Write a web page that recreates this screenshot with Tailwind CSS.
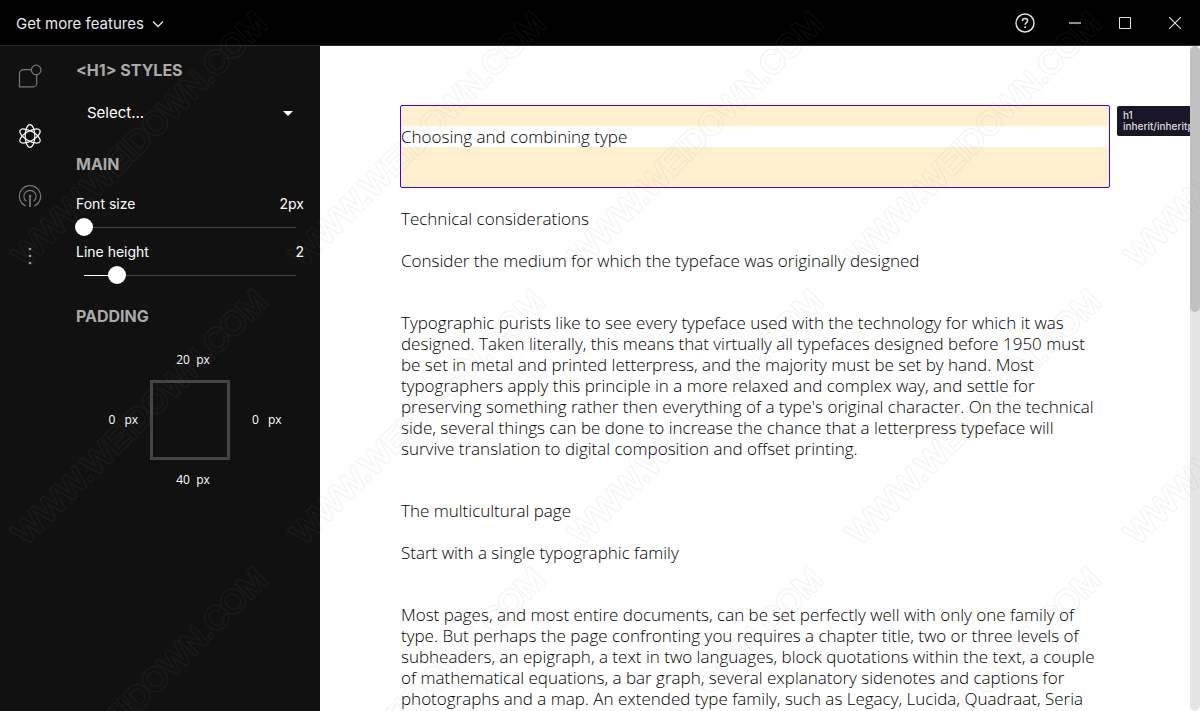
<!DOCTYPE html>
<html lang="en">
<head>
<meta charset="utf-8">
<title>Type styles</title>
<script src="https://cdn.jsdelivr.net/npm/@tailwindcss/browser@4"></script>
</head>
<body class="relative flex h-screen flex-col overflow-hidden bg-[#111] font-['Inter',sans-serif] text-white">
  <header class="flex h-[46px] shrink-0 items-center justify-between border-b border-[#2b2b2b] bg-black pl-4">
    <button class="flex items-center gap-2 pt-0.5 text-[15px] leading-6 text-[#e8e8e8]">
      Get more features
      <svg class="h-3 w-3" viewBox="0 0 12 12" fill="none" stroke="currentColor" stroke-width="1.3"><path d="M1 3.500l5 5 5-5"/></svg>
    </button>
    <div class="flex items-center text-[#e0e0e0]">
      <button aria-label="Help" class="flex h-11 w-[50px] items-center justify-center">
        <svg class="h-5 w-5" viewBox="0 0 20 20" fill="none" stroke="currentColor" stroke-width="1.5"><circle cx="10" cy="10" r="9"/><path d="M7.4 8.1c0-1.5 1.1-2.6 2.6-2.6s2.6 1 2.6 2.3c0 1.8-2.4 1.9-2.4 4"/><path d="M10.2 13.300v1.700" stroke-width="1.700"/></svg>
      </button>
      <button aria-label="Minimize" class="flex h-11 w-[50px] items-center justify-center">
        <svg class="h-3 w-3" viewBox="0 0 12 12" stroke="#8c8c8c" stroke-width="2"><path d="M0 6h12"/></svg>
      </button>
      <button aria-label="Maximize" class="flex h-11 w-[50px] items-center justify-center">
        <svg class="h-3 w-3" viewBox="0 0 12 12" fill="none" stroke="currentColor"><path d="M.5.5h11v11H.5z"/></svg>
      </button>
      <button aria-label="Close" class="flex h-11 w-[50px] items-center justify-center">
        <svg class="h-3 w-3" viewBox="0 0 12 12" stroke="currentColor" stroke-width="1.100"><path d="M0 0l12 12M12 0L0 12"/></svg>
      </button>
    </div>
  </header>

  <div class="flex min-h-0 flex-1">
    <nav class="flex w-[60px] shrink-0 flex-col items-center gap-9 pt-[18px] text-[#777]">
      <button aria-label="Components">
        <svg class="h-6 w-6" viewBox="0 0 24 24" fill="none" stroke="currentColor" stroke-width="1.200"><circle cx="18.200" cy="6" r="4.800"/><path d="M13.400 5.700H5.500a4 4 0 0 0-4 4v13.200h13.200a4 4 0 0 0 4-4v-8.100"/></svg>
      </button>
      <button aria-label="Styles" class="text-white">
        <svg class="h-6 w-6" viewBox="0 0 24 24" fill="none" stroke="currentColor" stroke-width="1.200"><ellipse cx="12" cy="12" rx="4.800" ry="11.400"/><ellipse cx="12" cy="12" rx="4.800" ry="11.400" transform="rotate(60 12 12)"/><ellipse cx="12" cy="12" rx="4.800" ry="11.400" transform="rotate(120 12 12)"/></svg>
      </button>
      <button aria-label="Broadcast">
        <svg class="h-6 w-6" viewBox="0 0 24 24" fill="none" stroke="currentColor" stroke-width="1.200"><path d="M7.600 21.900a10.600 10.600 0 1 1 8.800 0M8.400 17.300a6.100 6.100 0 1 1 7.200 0"/><path d="M12 12v11" stroke-width="1.800"/><circle cx="12" cy="12" r="1.300" fill="currentColor" stroke="none"/></svg>
      </button>
      <button aria-label="More" class="text-[#999]">
        <svg class="h-6 w-6" viewBox="0 0 24 24" fill="currentColor"><circle cx="12" cy="5" r="1.300"/><circle cx="12" cy="12" r="1.300"/><circle cx="12" cy="19" r="1.300"/></svg>
      </button>
    </nav>

    <aside class="w-[260px] shrink-0 px-4 pt-3 text-sm">
      <h2 class="text-base font-bold text-[#aaa]">&lt;H1&gt; STYLES</h2>
      <div class="relative mt-3 flex items-center">
        <select aria-label="Style preset" class="h-[38px] w-full appearance-none bg-transparent px-[11px] text-[15px] text-white outline-none">
          <option>Select...</option>
        </select>
        <svg class="pointer-events-none absolute right-[11px] h-[5px] w-[10px]" viewBox="0 0 10 5" fill="#fff"><path d="M0 0h10L5 5z"/></svg>
      </div>

      <h2 class="mt-5 text-base font-bold text-[#aaa]">MAIN</h2>
      <div class="mt-[18px] flex justify-between leading-5">
        <label for="font-size">Font size</label><output for="font-size">2px</output>
      </div>
      <div class="-mx-px mt-1 flex">
        <input id="font-size" type="range" min="2" max="100" value="2" class="h-[18px] w-full appearance-none bg-[linear-gradient(to_right,#444,#444)] bg-[length:calc(100%-18px)_1px] bg-center bg-no-repeat [&::-webkit-slider-thumb]:h-[18px] [&::-webkit-slider-thumb]:w-[18px] [&::-webkit-slider-thumb]:appearance-none [&::-webkit-slider-thumb]:rounded-full [&::-webkit-slider-thumb]:bg-white">
      </div>
      <div class="mt-1.5 flex justify-between leading-5">
        <label for="line-height">Line height</label><output for="line-height">2</output>
      </div>
      <div class="-mx-px mt-1 flex">
        <input id="line-height" type="range" min="0" max="13" value="2" class="h-[18px] w-full appearance-none bg-[linear-gradient(to_right,#fff_15%,#444_15%)] bg-[length:calc(100%-18px)_1px] bg-center bg-no-repeat [&::-webkit-slider-thumb]:h-[18px] [&::-webkit-slider-thumb]:w-[18px] [&::-webkit-slider-thumb]:appearance-none [&::-webkit-slider-thumb]:rounded-full [&::-webkit-slider-thumb]:bg-white">
      </div>

      <h2 class="mt-5 text-base font-bold text-[#aaa]">PADDING</h2>
      <div class="mt-[22px] flex flex-col items-center gap-2.5 font-['Open_Sans',sans-serif] text-xs leading-5">
        <label class="flex gap-0.5 pl-1.5"><input aria-label="Padding top" value="20" class="w-[18px] bg-transparent outline-none">px</label>
        <div class="flex items-center gap-3 pl-2.5">
          <label class="flex gap-0.5"><input aria-label="Padding left" value="0" class="w-[14px] bg-transparent outline-none">px</label>
          <div class="h-20 w-20 border-3 border-[#444]"></div>
          <label class="flex gap-0.5 pl-2.5"><input aria-label="Padding right" value="0" class="w-[14px] bg-transparent outline-none">px</label>
        </div>
        <label class="flex gap-0.5 pl-1.5"><input aria-label="Padding bottom" value="40" class="w-[18px] bg-transparent outline-none">px</label>
      </div>
    </aside>

    <main class="relative min-w-0 flex-1 overflow-hidden bg-white px-20 pt-[59px] font-['Open_Sans',sans-serif] text-[17px] leading-[21px] font-light text-black">
      <div class="relative rounded-xs border border-[#4a00e0] bg-[#fff0cf] pt-5 pb-10">
        <h1 class="bg-white">Choosing and combining type</h1>
        <div class="absolute top-0 left-full ml-2 rounded-xs bg-[#1a1625] px-1.5 py-1 font-['Inter',sans-serif] text-[10px] leading-[11px] font-medium whitespace-nowrap text-[#ddd]">h1<br>inherit/inheritpx</div>
      </div>
      <div class="pr-1.5 pl-px">
        <h2 class="mt-5">Technical considerations</h2>
        <h3 class="mt-[21px]">Consider the medium for which the typeface was originally designed</h3>
        <p class="mt-[41px]">Typographic purists like to see every typeface used with the technology for which it was designed. Taken literally, this means that virtually all typefaces designed before 1950 must be set in metal and printed letterpress, and the majority must be set by hand. Most typographers apply this principle in a more relaxed and complex way, and settle for preserving something rather then everything of a type's original character. On the technical side, several things can be done to increase the chance that a letterpress typeface will survive translation to digital composition and offset printing.</p>
        <h2 class="mt-[41px]">The multicultural page</h2>
        <h3 class="mt-[21px]">Start with a single typographic family</h3>
        <p class="mt-[41px]">Most pages, and most entire documents, can be set perfectly well with only one family of type. But perhaps the page confronting you requires a chapter title, two or three levels of subheaders, an epigraph, a text in two languages, block quotations within the text, a couple of mathematical equations, a bar graph, several explanatory sidenotes and captions for photographs and a map. An extended type family, such as Legacy, Lucida, Quadraat, Seria</p>
      </div>
    </main>
    <div class="w-2.5 shrink-0 bg-white"><div class="h-full rounded-full bg-[#e5e5e5]"><div class="h-2/5 rounded-full bg-[#c1c1c1]"></div></div></div>
  </div>

  <svg class="pointer-events-none absolute inset-0 h-full w-full" aria-hidden="true">
    <defs>
      <mask id="outline" maskUnits="userSpaceOnUse" x="0" y="0" width="278" height="278">
        <g transform="translate(26 268) rotate(-45)" font-family="Liberation Sans" font-size="32" stroke-linejoin="round">
          <text fill="#fff" stroke="#fff" stroke-width="3">WWW.WEIDOWN.COM</text>
          <text fill="#000" stroke="#000" stroke-width="1">WWW.WEIDOWN.COM</text>
        </g>
      </mask>
      <pattern id="mark" width="278" height="278" patternUnits="userSpaceOnUse">
        <rect width="278" height="278" fill="#808080" fill-opacity="0.100" mask="url(#outline)"/>
      </pattern>
    </defs>
    <rect width="100%" height="100%" fill="url(#mark)"/>
  </svg>
</body>
</html>
